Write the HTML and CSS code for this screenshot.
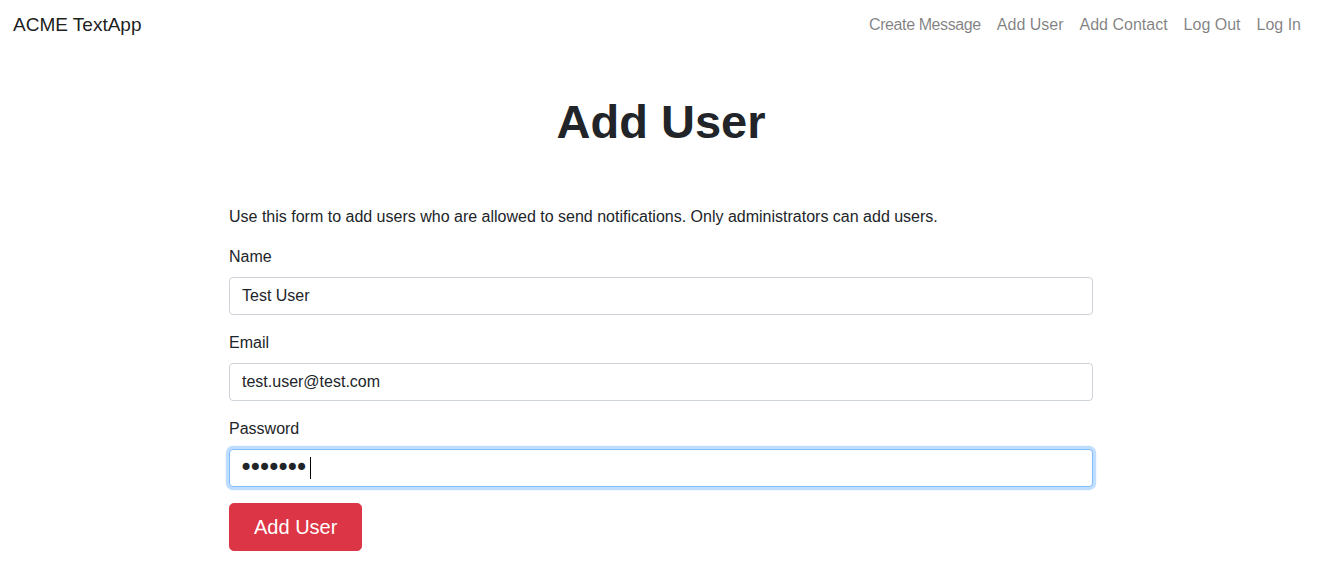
FILE: index.html
```html
<!DOCTYPE html>
<html lang="en">
<head>
<meta charset="utf-8">
<title>ACME TextApp - Add User</title>
<link rel="stylesheet" href="styles.css">
</head>
<body>
<nav class="navbar">
  <a class="brand" href="#">ACME TextApp</a>
  <ul class="nav-links">
    <li><a href="#">Create Message</a></li>
    <li><a href="#">Add User</a></li>
    <li><a href="#">Add Contact</a></li>
    <li><a href="#">Log Out</a></li>
    <li><a href="#">Log In</a></li>
  </ul>
</nav>
<main class="main">
  <h1 class="title">Add User</h1>
  <p class="intro">Use this form to add users who are allowed to send notifications. Only administrators can add users.</p>
  <form class="form">
    <div class="form-group">
      <label for="name">Name</label>
      <input class="form-control" id="name" type="text" value="Test User">
    </div>
    <div class="form-group">
      <label for="email">Email</label>
      <input class="form-control" id="email" type="email" value="test.user@test.com">
    </div>
    <div class="form-group">
      <label for="password">Password</label>
      <div class="input-wrap">
        <input class="form-control is-focused password" id="password" type="password" value="secret1">
        <span class="caret"></span>
      </div>
    </div>
    <button class="btn-danger" type="button">Add User</button>
  </form>
</main>
</body>
</html>
```
FILE: styles.css
```css
* { box-sizing: border-box; }
html, body {
  margin: 0;
  padding: 0;
  background: #fff;
}
body {
  font-family: "Liberation Sans", Arial, sans-serif;
  font-size: 16px;
  line-height: 1.5;
  color: #212529;
}
a { text-decoration: none; }

.navbar {
  display: flex;
  align-items: center;
  justify-content: space-between;
  height: 50px;
  padding: 0 9px 0 13px;
}
.brand {
  font-size: 19px;
  line-height: 30px;
  color: rgba(0, 0, 0, 0.9);
}
.nav-links {
  display: flex;
  list-style: none;
  margin: 0;
  padding: 0;
}
.nav-links a {
  display: block;
  padding: 8px;
  color: rgba(0, 0, 0, 0.5);
}
.nav-links li:first-child a {
  letter-spacing: -0.4px;
}

.main {
  width: 864px;
  margin-left: 229px;
}
.title {
  margin: 43px 0 54px;
  font-size: 47px;
  line-height: 57.6px;
  font-weight: 700;
  text-align: center;
}
.intro {
  margin: 0 0 16px;
}
.form-group {
  margin-bottom: 16px;
}
label {
  display: block;
  margin-bottom: 8px;
}
.input-wrap {
  position: relative;
}
.form-control {
  display: block;
  width: 100%;
  height: 38px;
  padding: 6px 12px;
  font: inherit;
  color: #212529;
  background: #fff;
  border: 1px solid #ced4da;
  border-radius: 4px;
  outline: none;
}
.form-control.password {
  padding: 0 0 0 9px;
  font-family: "DejaVu Sans", sans-serif;
  font-size: 24px;
  letter-spacing: -4.9px;
  line-height: 36px;
}
.form-control.is-focused {
  border-color: #80bdff;
  box-shadow: 0 0 0 3.2px rgba(0, 123, 255, 0.25);
}
.caret {
  position: absolute;
  left: 81px;
  top: 8px;
  width: 1px;
  height: 22px;
  background: #000;
}
.btn-danger {
  display: inline-block;
  padding: 8px 24px;
  font: inherit;
  font-size: 20px;
  line-height: 30px;
  color: #fff;
  background: #dc3545;
  border: 1px solid #dc3545;
  border-radius: 4.8px;
}
```
